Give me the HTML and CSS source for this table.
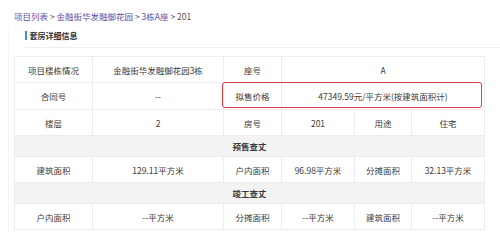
FILE: index.html
```html
<!DOCTYPE html>
<html lang="zh">
<head>
<meta charset="utf-8">
<link rel="stylesheet" href="styles.css">
</head>
<body>
<div class="page">
  <div class="crumbs"><a>项目列表</a> &gt; <a>金融街华发融御花园</a> &gt; <a>3栋A座</a> &gt; 201</div>
  <div class="panel">
    <div class="title"><span class="bar"></span>套房详细信息</div>
    <div class="tablewrap">
      <table class="info">
        <colgroup>
          <col style="width:78px"><col style="width:131px"><col style="width:58px"><col style="width:73px"><col style="width:57px"><col style="width:73px">
        </colgroup>
        <tr class="r1"><td>项目楼栋情况</td><td>金融街华发融御花园3栋</td><td>座号</td><td colspan="3">A</td></tr>
        <tr class="r2"><td>合同号</td><td>--</td><td>拟售价格</td><td colspan="3">47349.59元/平方米(按建筑面积计)</td></tr>
        <tr class="r3"><td>楼层</td><td>2</td><td>房号</td><td>201</td><td>用途</td><td>住宅</td></tr>
        <tr class="head"><td colspan="6">预售查丈</td></tr>
        <tr class="r3"><td>建筑面积</td><td>129.11平方米</td><td>户内面积</td><td>96.98平方米</td><td>分摊面积</td><td>32.13平方米</td></tr>
        <tr class="head"><td colspan="6">竣工查丈</td></tr>
        <tr class="r3"><td>户内面积</td><td>--平方米</td><td>分摊面积</td><td>--平方米</td><td>建筑面积</td><td>--平方米</td></tr>
      </table>
      <div class="mark"></div>
    </div>
  </div>
</div>
</body>
</html>
```
FILE: styles.css
```css
html, body {
  margin: 0;
  padding: 0;
  background: #ffffff;
}
body {
  font-family: "Noto Sans CJK SC", "Noto Sans", sans-serif;
  color: #333333;
  width: 500px;
  height: 247px;
  overflow: hidden;
}
.page {
  padding: 10px 0 0 0;
}
.crumbs {
  font-size: 8.5px;
  line-height: 12px;
  padding-left: 14px;
  color: #555560;
}
.crumbs a {
  color: #5d4fa8;
}
.panel {
  margin-top: 6px;
  margin-left: 8px;
  border-left: 1px solid #f6f6f6;
  padding-bottom: 3px;
}
.title {
  display: flex;
  align-items: center;
  gap: 3px;
  font-size: 8px;
  font-weight: 600;
  color: #333;
  margin-left: 16px;
  height: 14px;
  padding-bottom: 5px;
  border-bottom: 1px solid #eeeeee;
}
.bar {
  width: 1.5px;
  height: 9px;
  background: #3a8ee6;
}
.tablewrap {
  position: relative;
  margin: 8px 0 0 5px;
  width: 471px;
}
.info {
  border-collapse: collapse;
  table-layout: fixed;
  width: 471px;
  font-size: 8.5px;
  color: #3a3a3a;
}
.info td {
  border: 1px solid #ececec;
  text-align: center;
  padding: 0;
}
.r1 td { height: 25px; }
.r2 td { height: 26px; }
.r3 td { height: 25px; }
.head td {
  height: 20px;
  background: #f3f3f3;
  font-weight: 600;
}
.mark {
  position: absolute;
  left: 208px;
  top: 26px;
  width: 258px;
  height: 24px;
  border: 1.5px solid #dc3a45;
  border-radius: 3px;
}
```
